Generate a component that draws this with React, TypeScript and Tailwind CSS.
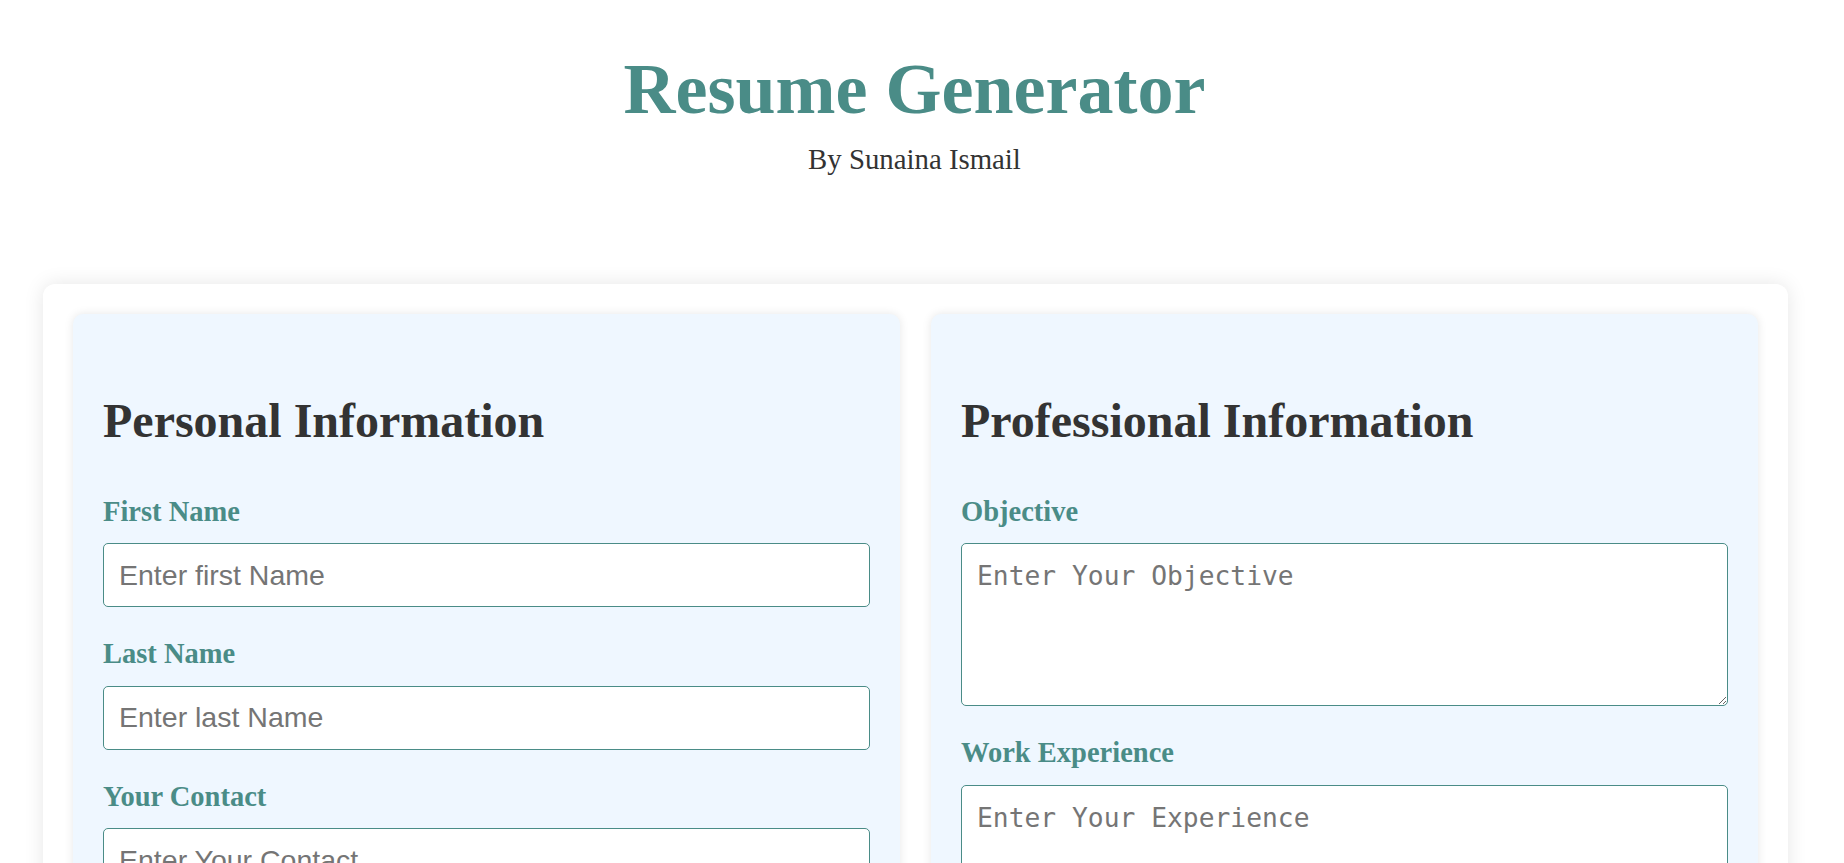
import { useState } from "react";

interface Field {
    name: string;
    label: string;
    placeholder: string;
    type: "input" | "textarea";
}

const personalFields: Field[] = [
    { name: "firstName", label: "First Name", placeholder: "Enter first Name", type: "input" },
    { name: "lastName", label: "Last Name", placeholder: "Enter last Name", type: "input" },
    { name: "contact", label: "Your Contact", placeholder: "Enter Your Contact", type: "input" },
    { name: "email", label: "Email", placeholder: "Enter Your Email", type: "input" },
    { name: "address", label: "Address", placeholder: "Enter Your Address", type: "input" },
];

const professionalFields: Field[] = [
    { name: "objective", label: "Objective", placeholder: "Enter Your Objective", type: "textarea" },
    { name: "experience", label: "Work Experience", placeholder: "Enter Your Experience", type: "textarea" },
    { name: "education", label: "Education", placeholder: "Enter Your Education", type: "textarea" },
];

function FormField({
    field,
    value,
    onChange,
}: {
    field: Field;
    value: string;
    onChange: (v: string) => void;
}) {
    return (
        <div className="flex flex-col mb-[31px]">
            <label
                htmlFor={field.name}
                className="text-[28.5px] leading-[31.5px] font-bold text-[#4a8c87] mb-[16px]"
            >
                {field.label}
            </label>
            {field.type === "input" ? (
                <input
                    id={field.name}
                    type="text"
                    value={value}
                    placeholder={field.placeholder}
                    onChange={(e) => onChange(e.target.value)}
                    className="w-full h-[64px] px-[15px] bg-white border border-[#4a8c87] rounded-[5px] text-[28.5px] text-[#333] placeholder:text-[#757575] outline-none font-['Liberation_Sans',Arial,sans-serif]"
                />
            ) : (
                <textarea
                    id={field.name}
                    value={value}
                    placeholder={field.placeholder}
                    onChange={(e) => onChange(e.target.value)}
                    className="block w-full h-[163px] px-[15px] pt-[16px] pb-[12px] bg-white border border-[#4a8c87] rounded-[5px] text-[26.3px] leading-[32px] text-[#333] placeholder:text-[#757575] outline-none font-['DejaVu_Sans_Mono',monospace]"
                />
            )}
        </div>
    );
}

export default function App() {
    const [values, setValues] = useState<Record<string, string>>({});

    const update = (name: string) => (v: string) =>
        setValues((prev) => ({ ...prev, [name]: v }));

    return (
        <div className="min-h-screen bg-white text-[#333] pr-[15px] font-['Liberation_Serif','Times_New_Roman',serif]">
            {/* ===== HEADER ===== */}
            <header className="text-center pt-[49px]">
                <h1 className="text-[72px] leading-[80px] font-bold text-[#4a8c87]">
                    Resume Generator
                </h1>
                <p className="mt-[15px] text-[28.8px] leading-[31.5px] text-[#333]">
                    By Sunaina Ismail
                </p>
            </header>

            {/* ===== FORM ===== */}
            <form className="ml-[43px] mr-[41px] mt-[108px] mb-[40px] p-[30px] bg-white rounded-[12px] shadow-[0_0_20px_rgba(0,0,0,0.1)]">
                <div className="grid grid-cols-2 gap-[31px]">
                    <section className="bg-[#eff7ff] rounded-[10px] px-[30px] pt-[80px] pb-[30px] shadow-[0_0_10px_rgba(0,0,0,0.1)]">
                        <h2 className="text-[48px] leading-[53px] font-bold text-[#333] mb-[49px]">
                            Personal Information
                        </h2>
                        {personalFields.map((f) => (
                            <FormField
                                key={f.name}
                                field={f}
                                value={values[f.name] ?? ""}
                                onChange={update(f.name)}
                            />
                        ))}
                    </section>
                    <section className="bg-[#eff7ff] rounded-[10px] px-[30px] pt-[80px] pb-[30px] shadow-[0_0_10px_rgba(0,0,0,0.1)]">
                        <h2 className="text-[48px] leading-[53px] font-bold text-[#333] mb-[49px]">
                            Professional Information
                        </h2>
                        {professionalFields.map((f) => (
                            <FormField
                                key={f.name}
                                field={f}
                                value={values[f.name] ?? ""}
                                onChange={update(f.name)}
                            />
                        ))}
                    </section>
                </div>
                <div className="flex justify-center mt-[30px]">
                    <button
                        type="button"
                        className="px-[30px] py-[12px] rounded-[5px] bg-[#4a8c87] text-white text-[24px] font-bold"
                    >
                        Generate Resume
                    </button>
                </div>
            </form>
        </div>
    );
}
